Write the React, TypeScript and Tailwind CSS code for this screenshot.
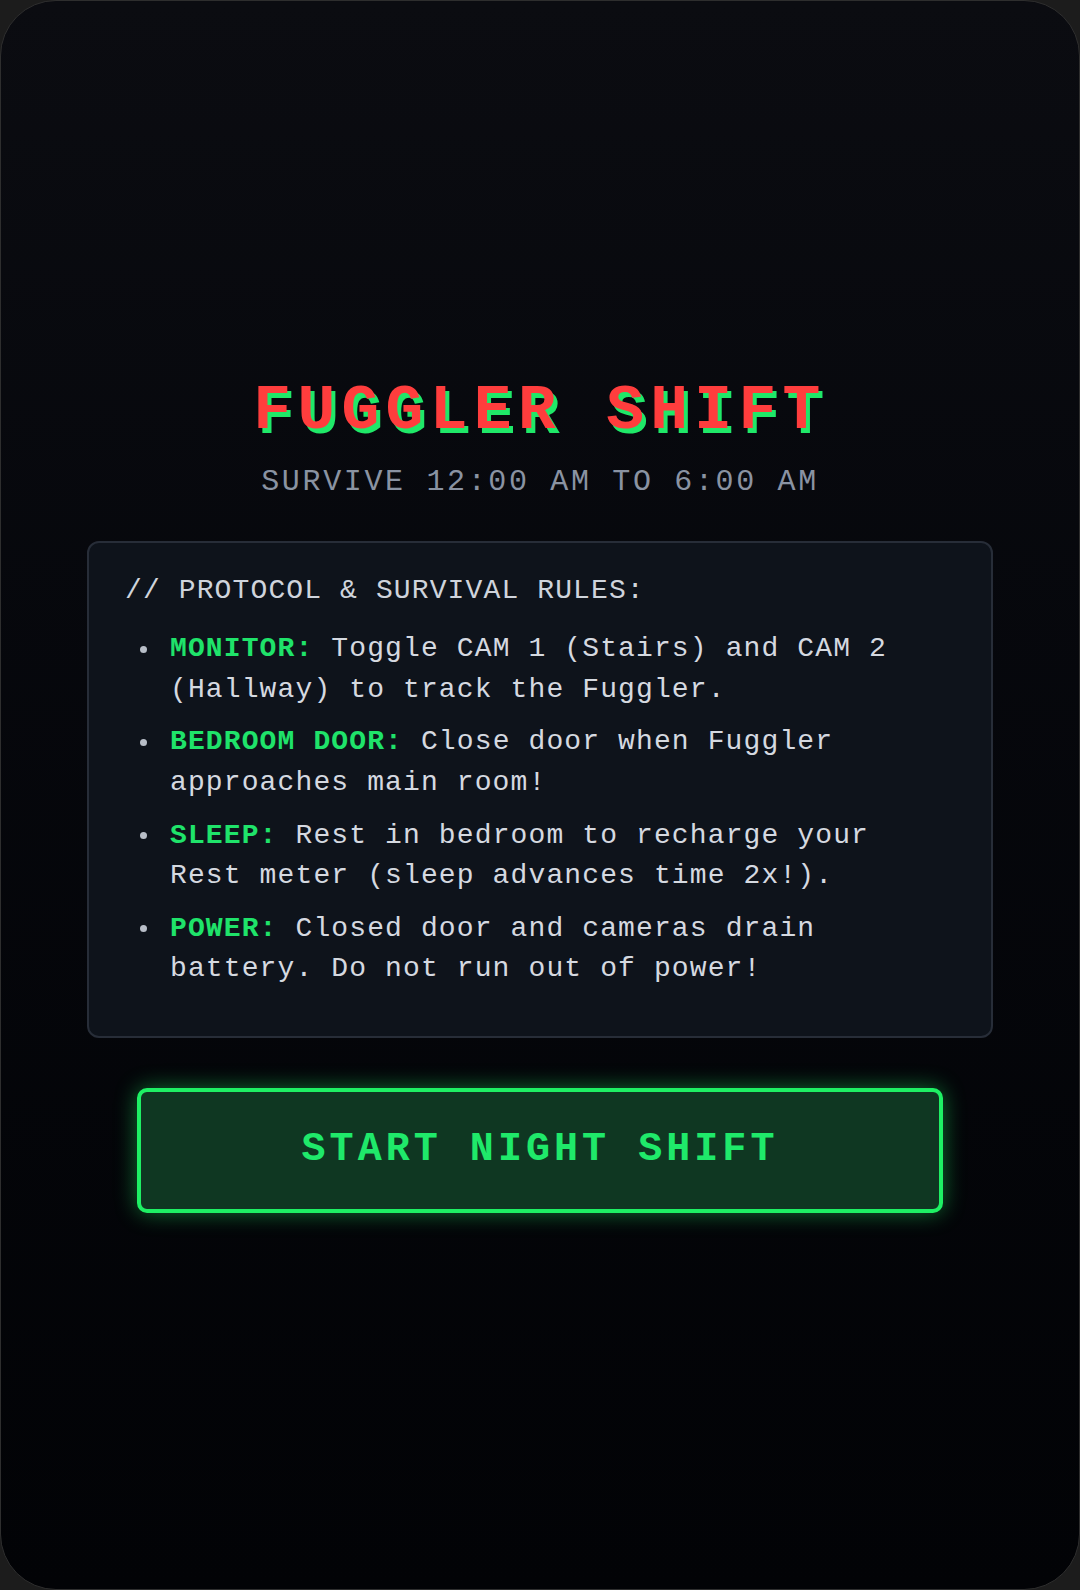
import React from 'react';

type Rule = {
  label: string;
  text: string;
};

const RULES: Rule[] = [
  { label: 'MONITOR:', text: 'Toggle CAM 1 (Stairs) and CAM 2 (Hallway) to track the Fuggler.' },
  { label: 'BEDROOM DOOR:', text: 'Close door when Fuggler approaches main room!' },
  { label: 'SLEEP:', text: 'Rest in bedroom to recharge your Rest meter (sleep advances time 2x!).' },
  { label: 'POWER:', text: 'Closed door and cameras drain battery. Do not run out of power!' },
];

const App: React.FC = () => {
  return (
    <div className="w-[1080px] h-[1590px] bg-[#1c1c1c] font-['Liberation_Mono',monospace]">
      <div className="w-full h-full rounded-[56px] border border-[#2e2e2e] bg-gradient-to-b from-[#0b0c11] to-[#020306] flex flex-col items-center justify-center pt-[3px] overflow-hidden">
        {/* Title screen */}
        <h1 className="text-[63px] leading-none font-bold tracking-[6.3px] text-[#ff3d3d] [text-shadow:4px_5px_0_#1fe868]">
          FUGGLER SHIFT
        </h1>
        <p className="mt-[21px] text-[30px] leading-[36px] tracking-[2.65px] text-[#8a93a2]">
          SURVIVE 12:00 AM TO 6:00 AM
        </p>

        {/* Rules panel */}
        <div className="mt-[41px] w-[906px] rounded-[12px] border-2 border-[#272d38] bg-[#0e131b] pl-[36px] pr-[36px] pt-[28px] pb-[46px]">
          <div className="text-[28px] leading-[40px] tracking-[1.12px] text-[#cfd4dc]">
            // PROTOCOL &amp; SURVIVAL RULES:
          </div>
          <ul className="mt-[18px] pr-[30px] flex flex-col gap-[12px]">
            {RULES.map((rule) => (
              <li key={rule.label} className="flex text-[28px] leading-[40.6px] tracking-[1.12px] text-[#d5d9e0]">
                <span className="w-[45px] shrink-0 h-[40.6px] flex items-center pl-[15px]">
                  <span className="w-[7px] h-[7px] rounded-full bg-[#b8bec8]" />
                </span>
                <span>
                  <span className="font-bold text-[#1fe36a]">{rule.label}</span> {rule.text}
                </span>
              </li>
            ))}
          </ul>
        </div>

        <button className="mt-[50px] w-[806px] h-[125px] rounded-[10px] border-4 border-[#1ef064] bg-[#0f3722] text-[40px] font-bold tracking-[4.05px] text-[#1fe96a] shadow-[0_0_22px_rgba(30,240,100,0.45)]">
          START NIGHT SHIFT
        </button>
      </div>
    </div>
  );
};

export default App;
